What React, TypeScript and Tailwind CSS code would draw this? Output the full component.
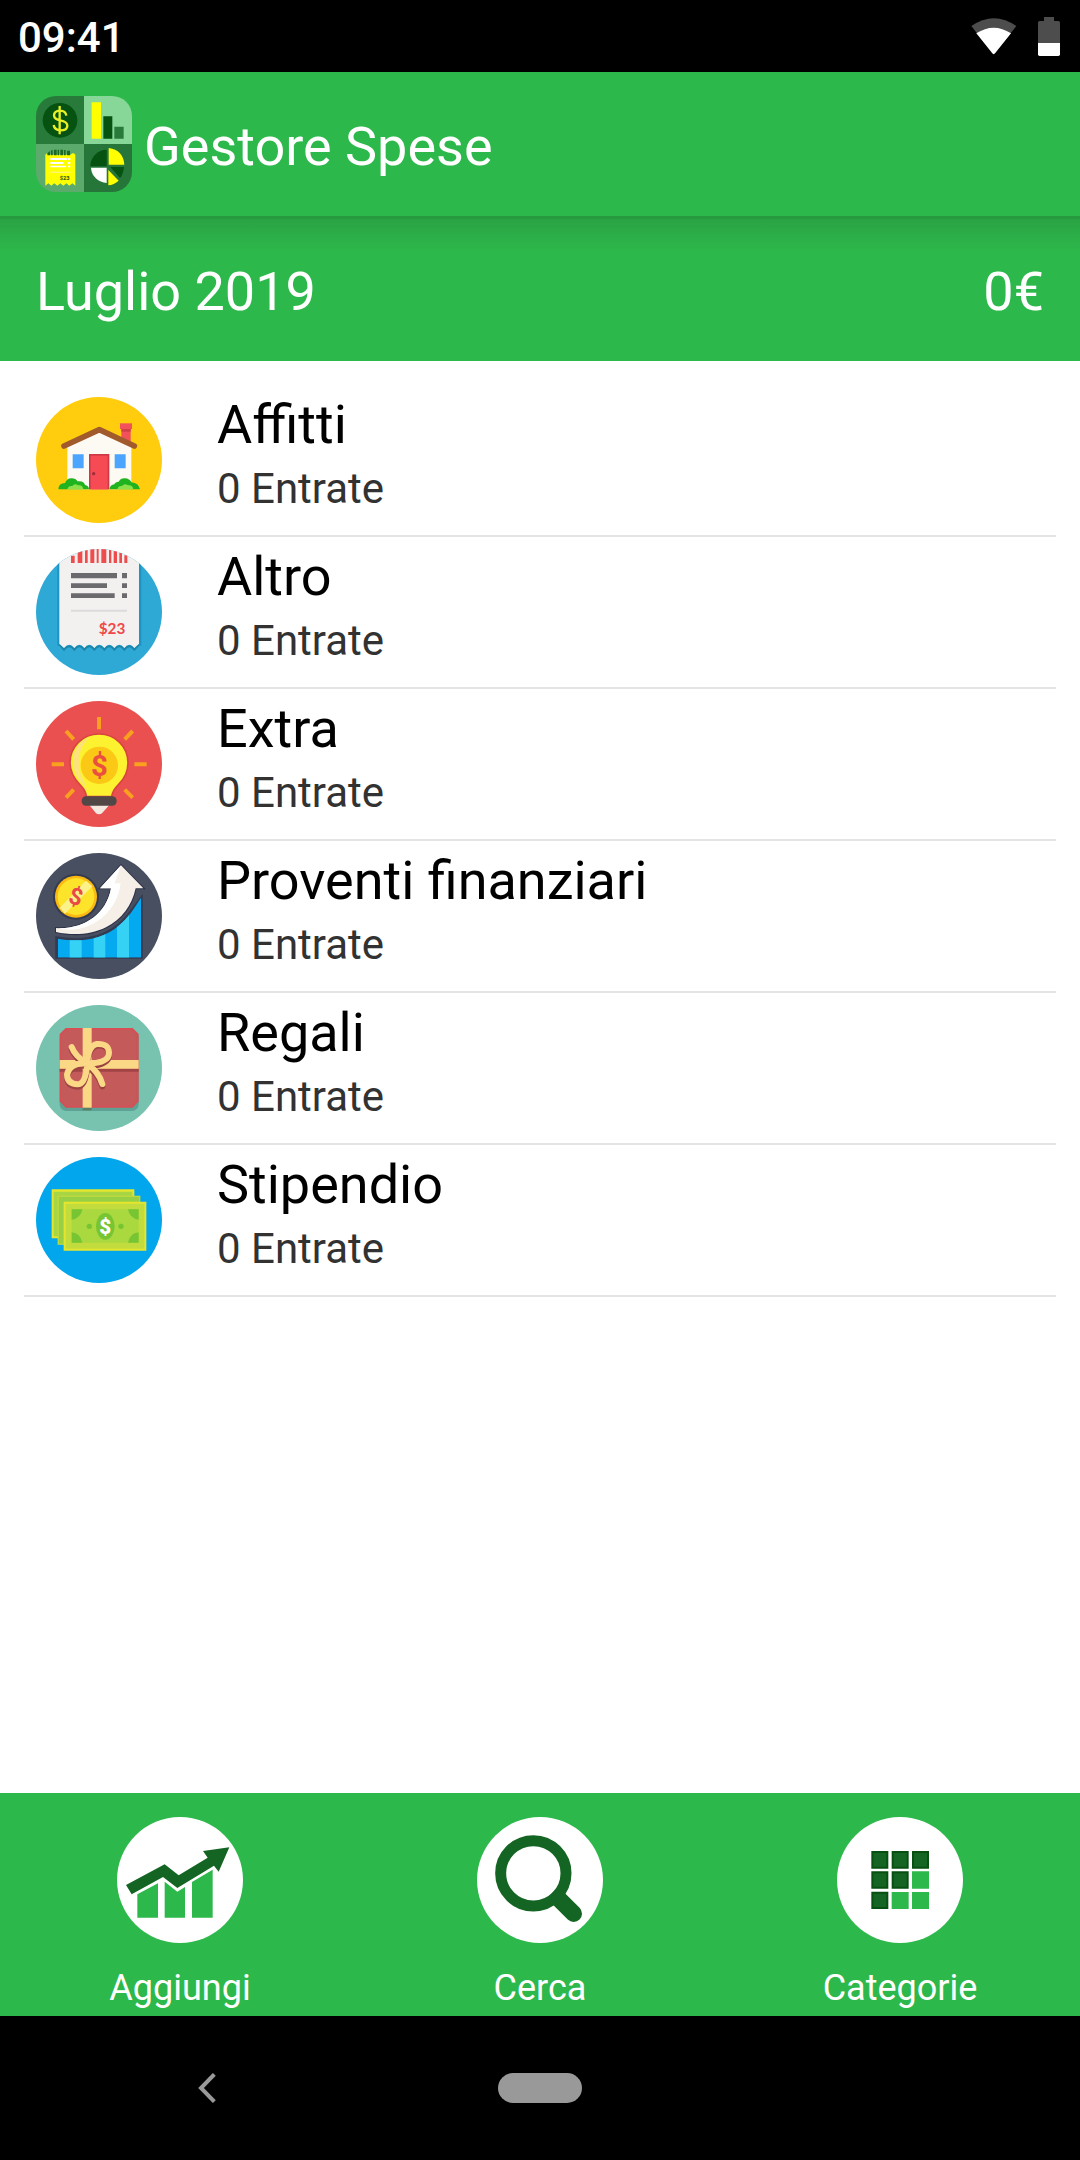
import React from "react";

const HouseIcon = () => (
  <svg viewBox="48 51 378 378" className="size-[126px] shrink-0" aria-hidden="true">
    <circle cx="237" cy="240" r="189" fill="#ffcd0d" />
    <path d="M304 146h28v44h-28z" fill="#f2505a" />
    <path d="M300 130h36v17h-36z" fill="#f2505a" />
    <path d="M304 147h28v8h-28z" fill="#cf4049" />
    <path d="M142 198 238 152 334 198V328H142z" fill="#fdfaf3" />
    <path d="M132 198 238 149 343 198" fill="none" stroke="#a05a2c" strokeWidth="17" strokeLinecap="round" strokeLinejoin="round" />
    <path d="M158 223h33v42h-33zM284 223h33v42h-33z" fill="#4ba5ff" />
    <path d="M207 222h61v106h-61z" fill="#cf3946" />
    <path d="M212 227h51v101h-51z" fill="#f64b55" />
    <circle cx="221" cy="281" r="5" fill="#9c2f3a" />
    <path d="M115 328q0-18 20-19 6-15 20-14 13 0 17 9 20-3 23 11 12 2 12 13z" fill="#1fb31f" />
    <path d="M268 328q2-14 15-15 3-8 13-8 6-11 19-10 14 1 19 12 22 2 26 21z" fill="#1fb31f" />
    <path d="M142 328q2-11 15-10 7-9 17-2 14-2 16 12zM292 328q3-12 14-10 8-10 18-2 14-2 16 12z" fill="#8de04a" />
  </svg>
);

const ReceiptIcon = () => (
  <svg viewBox="48 42 378 378" className="size-[126px] shrink-0" aria-hidden="true">
    <clipPath id="receiptClip">
      <circle cx="237" cy="231" r="189" />
    </clipPath>
    <g clipPath="url(#receiptClip)">
      <path d="M48 42h378v378H48z" fill="#2ea9d6" />
      <path d="M112 42h6v290h-6zM357 42h7v290h-7z" fill="#1c94c4" />
      <path
        d="M357 329l-14 15q-15-20-30 0-15-20-30 0-15-20-30 0-15-20-30 0-15-20-30 0-15-20-30 0-15-20-31 0l-14-15"
        fill="none"
        stroke="#1c86ab"
        strokeWidth="6"
      />
      <path
        d="M118 42H357V326l-14 13q-15-20-30 0-15-20-30 0-15-20-30 0-15-20-30 0-15-20-30 0-15-20-30 0-15-20-31 0l-14-13z"
        fill="#f3f1f0"
      />
      <path
        d="M153 62h11v22h-11zM173 42h14v42h-14zM195 42h8v42h-8zM211 42h12v42h-12zM230 42h6v42h-6zM244 42h15v42h-15zM267 42h7v42h-7zM281 48h10v36h-10zM298 54h8v30h-8zM313 61h9v23h-9z"
        fill="#ee4d4d"
      />
      <path d="M153 114h138v16H153zM153 145h108v14H153zM153 175h131v14H153zM306 114h15v16h-15zM306 145h15v14h-15zM306 175h15v14h-15z" fill="#6b6b6d" />
      <path d="M153 224h168v6H153z" fill="#dcdada" />
      <text x="276" y="296" textAnchor="middle" fontSize="46" fontWeight="700" fill="#f04747" fontFamily="Lato, sans-serif">
        $23
      </text>
    </g>
  </svg>
);

const BulbIcon = () => (
  <svg viewBox="48 33 378 378" className="size-[126px] shrink-0" aria-hidden="true">
    <circle cx="237" cy="222" r="189" fill="#ea5050" />
    <path
      d="M237 81v37M138 123l23 25M338 123l-24 25M95 223h37M343 223h37M138 323l23-24M338 323l-24-24"
      stroke="#f9a01f"
      strokeWidth="12"
    />
    <path
      d="M237 132c49 0 87 38 87 86 0 31-14 51-28 65-13 14-18 20-21 37h-76c-2-17-8-24-20-37-15-16-29-35-29-65 0-48 38-86 87-86z"
      fill="#fdf22f"
      stroke="#d9443f"
      strokeWidth="5"
    />
    <path d="M172 262c-28-52-9-104 38-120-31 25-38 64-30 102 5 24 20 42 24 62-8-19-21-26-32-44z" fill="#fbe27a" />
    <circle cx="238" cy="226" r="56" fill="#fbc816" />
    <text x="238" y="258" textAnchor="middle" fontSize="88" fontWeight="700" fill="#ea4f3f" fontFamily="Roboto, sans-serif">
      $
    </text>
    <path d="M208 345h60l-22 25q-9 6-18 0z" fill="#f3e9e0" />
    <rect x="185" y="319" width="105" height="28" rx="13" fill="#524747" />
  </svg>
);

const GrowthIcon = () => (
  <svg viewBox="48 39 378 378" className="size-[126px] shrink-0" aria-hidden="true">
    <circle cx="237" cy="228" r="189" fill="#474f60" />
    <path d="M106 288q140 26 214-64l48-62v194H106z" fill="#343a50" />
    <clipPath id="growthClip">
      <path d="M113 296c68 12 131 4 183-39 31-26 47-53 67-84v180H113z" />
    </clipPath>
    <g clipPath="url(#growthClip)">
      <path d="M113 160h250v193H113z" fill="#05a9ef" />
      <path d="M149 160h36v193h-36zM221 160h35v193h-35zM291 160h36v193h-36z" fill="#35d2f6" />
    </g>
    <circle cx="168" cy="170" r="69" fill="#343a50" />
    <circle cx="168" cy="170" r="63" fill="#fbba12" />
    <circle cx="168" cy="170" r="55" fill="#fde42b" />
    <path d="M119 203 198 122l19 17-82 82z" fill="#fdf28a" />
    <text x="168" y="194" textAnchor="middle" fontSize="70" fontWeight="700" fill="#ea4a45" fontFamily="Roboto, sans-serif" transform="rotate(16 168 170)">
      $
    </text>
    <path
      d="M303 76 370 145H347C336 196 305 238 258 262 211 286 154 286 108 276V264C186 270 259 226 273 145H240z"
      fill="#f5efe8"
      stroke="#2c3149"
      strokeWidth="6"
      paintOrder="stroke"
    />
    <path d="M303 76 240 145h33c-14 81-87 125-165 119 100 25 183-44 194-134h-18z" fill="#fff" />
  </svg>
);

const GiftIcon = () => (
  <svg viewBox="48 45 378 378" className="size-[126px] shrink-0" aria-hidden="true">
    <circle cx="237" cy="234" r="189" fill="#78c2b0" />
    <rect x="119" y="125" width="237" height="238" rx="20" fill="#5da294" />
    <path d="M137 114h201l18 18v202l-18 19H137l-18-19V132z" fill="#d54f55" />
    <path d="M140 120h195l15 15v196l-15 16H140l-15-16V135z" fill="#c55a5b" />
    <path d="M119 236h237v9H119z" fill="#a04445" />
    <path d="M188 352h27v9h-27z" fill="#5b8068" />
    <path d="M188 114h27v239h-27z" fill="#fbd886" />
    <path d="M119 210h237v26H119z" fill="#fbd886" />
    <g fill="none" strokeWidth="18" strokeLinecap="round">
      <path
        d="M155 178q10 27 45 49 36 25 47 62M202 228q2-54 29-61 36-2 36 27 0 32-65 34M202 228q-54-5-61 33 1 28 31 29 25 0 30-62"
        stroke="#9c4342"
      />
      <path
        d="M155 171q10 27 45 49 36 25 47 62M202 221q2-54 29-59 36-2 36 27 0 30-65 32M202 221q-54-5-61 33 1 28 31 29 25 0 30-62"
        stroke="#fbd886"
      />
    </g>
  </svg>
);

const CashIcon = () => (
  <svg viewBox="48 36 378 378" className="size-[126px] shrink-0" aria-hidden="true">
    <circle cx="237" cy="225" r="189" fill="#02a6ed" />
    <path d="M95 133h248v147H95z" fill="#e4e62d" />
    <path d="M101 140h236v134H101z" fill="#a8d544" />
    <path d="M113 152h248v147H113z" fill="#c9dc38" />
    <path d="M116 155h242v141H116z" fill="#98d045" />
    <path d="M131 170h248v147H131z" fill="#e4e62d" />
    <path d="M137 176h236v135H137z" fill="#c3dc3d" />
    <path d="M155 193h201v100H155z" fill="#a9d83f" />
    <path d="M155 193h32q-5 28-32 31zM356 193h-32q5 28 32 31zM155 293h32q-5-28-32-31zM356 293h-32q5-28 32-31z" fill="#77c533" />
    <ellipse cx="256" cy="244" rx="28" ry="40" fill="#77c533" />
    <circle cx="208" cy="244" r="8" fill="#77c533" />
    <circle cx="303" cy="244" r="8" fill="#77c533" />
    <text x="256" y="266" textAnchor="middle" fontSize="62" fontWeight="900" fill="#fff" fontFamily="Roboto, sans-serif">
      $
    </text>
  </svg>
);

const AddIcon = () => (
  <svg viewBox="81 111 378 378" className="size-[126px]" aria-hidden="true">
    <circle cx="270" cy="300" r="189" fill="#fff" />
    <path d="M142 343 204 310v103h-62zM224 305l38 30 23-14v92h-61zM306 306l62-37v144h-62z" fill="#2db84b" />
    <path d="M108 315 224 253 266 286 353 233 339 213 418 202 386 275 372 257 262 324 219 291 125 343z" fill="#146523" />
  </svg>
);

const SearchIcon = () => (
  <svg viewBox="81 111 378 378" className="size-[126px]" aria-hidden="true">
    <circle cx="270" cy="300" r="189" fill="#fff" />
    <circle cx="250" cy="280" r="98" fill="none" stroke="#146523" strokeWidth="33" />
    <path d="M325 355 371 401" stroke="#146523" strokeWidth="50" strokeLinecap="round" />
  </svg>
);

const GridIcon = () => (
  <svg viewBox="81 111 378 378" className="size-[126px]" aria-hidden="true">
    <circle cx="270" cy="300" r="189" fill="#fff" />
    <path
      d="M187 216h45v47h-45zM248 216h45v47h-45zM309 216h45v47h-45zM187 277h45v46h-45zM248 277h45v46h-45zM187 338h45v46h-45z"
      fill="#146523"
      stroke="#075012"
      strokeWidth="6"
    />
    <path d="M306 274h51v52h-51zM245 336h51v51h-51zM306 336h51v51h-51z" fill="#2db84b" />
  </svg>
);

const AppLogo = () => (
  <svg viewBox="108 288 288 288" className="size-24 shrink-0" aria-hidden="true">
    <clipPath id="logoClip">
      <rect x="108" y="288" width="288" height="288" rx="60" />
    </clipPath>
    <g clipPath="url(#logoClip)">
      <path d="M108 288h144v144H108z" fill="#287a3b" />
      <path d="M252 288h144v144H252z" fill="#87d798" />
      <path d="M108 432h144v144H108z" fill="#5cab6d" />
      <path d="M252 432h144v144H252z" fill="#26763a" />
      <circle cx="180" cy="361" r="52" fill="#055211" />
      <path
        d="M199 347q-2-15-19-15-18 1-18 15 1 11 19 14 21 4 21 16 0 14-21 14-18-1-20-16M179 318v85"
        fill="none"
        stroke="#e8ef25"
        strokeWidth="7"
      />
      <path d="M275 307h28v109h-28z" fill="#ff0" />
      <path d="M310 349h27v67h-27z" fill="#055211" />
      <path d="M343 380h28v36h-28z" fill="#287a3b" />
      <path d="M136 464q9-8 14 0h62q7-8 14 0v93l-9-7-9 7-9-7-9 7-9-7-9 7-9-7-9 7-9-7-9 7z" fill="#ff0" />
      <path d="M142 460l8-7v13h-8zM153 451h5v15h-5zM162 449h8v17h-8zM173 449h4v17h-4zM181 449h8v17h-8zM192 450h5v16h-5zM201 452h9v14h-9z" fill="#1c6a22" />
      <path d="M151 474h50v6h-50zM151 486h39v6h-39zM151 497h47v5h-47zM204 474h7v6h-7zM204 486h7v6h-7zM204 497h7v5h-7z" fill="#fff" />
      <path d="M151 515h60v3h-60z" fill="#fff59a" />
      <text x="194" y="540" textAnchor="middle" fontSize="17" fontWeight="900" fill="#3f5f14" fontFamily="Roboto, sans-serif">
        $23
      </text>
      <path d="M320 499V449a50 50 0 0 0-49 50z" fill="#055211" />
      <path d="M326 494V444q44 6 47 50z" fill="#ff0" />
      <path d="M320 503V549a49 49 0 0 1-47-46z" fill="#fff" />
      <path d="M331 501H372q-2 22-12 33z" fill="#055211" />
      <path d="M325 510V556q17-2 31-14z" fill="#ff0" />
    </g>
  </svg>
);

const WifiIcon = () => (
  <svg viewBox="212 50 138 111" className="h-[37px] w-[46px]" aria-hidden="true">
    <path d="M213 74Q281 27 348 74L284 156Q280 161 276 156z" fill="#4d4d4d" />
    <path d="M228 96Q280 62 332 96L284 156Q280 161 276 156z" fill="#fff" />
  </svg>
);

const BatteryIcon = () => (
  <svg viewBox="414 48 66 117" className="h-[39px] w-[22px]" aria-hidden="true">
    <path d="M432 48h30v12h13q5 0 5 5v61h-66V65q0-5 5-5h13z" fill="#4d4d4d" />
    <path d="M414 126h66v34q0 5-5 5h-56q-5 0-5-5z" fill="#fff" />
  </svg>
);

const categories = [
  { name: "Affitti", entries: 0, Icon: HouseIcon },
  { name: "Altro", entries: 0, Icon: ReceiptIcon },
  { name: "Extra", entries: 0, Icon: BulbIcon },
  { name: "Proventi finanziari", entries: 0, Icon: GrowthIcon },
  { name: "Regali", entries: 0, Icon: GiftIcon },
  { name: "Stipendio", entries: 0, Icon: CashIcon },
];

const actions = [
  { label: "Aggiungi", Icon: AddIcon },
  { label: "Cerca", Icon: SearchIcon },
  { label: "Categorie", Icon: GridIcon },
];

const App = () => {
  return (
    <div className="flex min-h-screen flex-col bg-white font-[Roboto,sans-serif]">
      <div className="flex h-[72px] items-center justify-between bg-black pr-5 pl-[18px] text-white">
        <span className="pt-1 text-[42px] leading-[50px] font-medium">09:41</span>
        <div className="flex items-center gap-[21px]">
          <WifiIcon />
          <BatteryIcon />
        </div>
      </div>

      <header className="flex h-36 items-center gap-3 bg-[#2db84b] px-9 text-white">
        <AppLogo />
        <h1 className="pt-1.5 text-[54px] leading-[64px]">Gestore Spese</h1>
      </header>

      {/* the gradient is the shadow dropped by the header */}
      <div className="flex h-[145px] items-center justify-between bg-[#2db84b] bg-[linear-gradient(#279a40_3px,#2aa344_3px,#2db84b_36px)] px-9 pt-1.5 text-[54px] leading-[64px] text-white">
        <h2>Luglio 2019</h2>
        <span>0€</span>
      </div>

      <main className="flex-1 px-6 pt-6">
        <ul>
          {categories.map(({ name, entries, Icon }) => (
            <li key={name} className="border-b-2 border-[#e4e4e4]">
              <button type="button" className="flex h-[150px] w-full items-start gap-[55px] px-3 text-left">
                <span className="pt-3">
                  <Icon />
                </span>
                <span className="flex flex-col pt-1">
                  <span className="text-[54px] leading-[72px] text-black">{name}</span>
                  <span className="text-[42px] leading-[56px] text-[#323232]">{entries} Entrate</span>
                </span>
              </button>
            </li>
          ))}
        </ul>
      </main>

      <nav className="grid grid-cols-3 bg-[#2db84b] text-white">
        {actions.map(({ label, Icon }) => (
          <button key={label} type="button" className="flex flex-col items-center gap-6 pt-6 pb-[7px]">
            <Icon />
            <span className="text-[36px] leading-[42px]">{label}</span>
          </button>
        ))}
      </nav>

      <div className="grid h-36 grid-cols-[1fr_84px_1fr] items-center bg-black">
        <div className="flex justify-center pr-[84px]">
          <button type="button" aria-label="Indietro">
            <svg viewBox="0 0 54 90" className="h-[30px] w-[18px]" aria-hidden="true">
              <path d="M49 4 9 45 49 86" fill="none" stroke="#999" strokeWidth="12" />
            </svg>
          </button>
        </div>
        <button type="button" aria-label="Home" className="h-[30px] rounded-full bg-[#999]" />
      </div>
    </div>
  );
};

export default App;
